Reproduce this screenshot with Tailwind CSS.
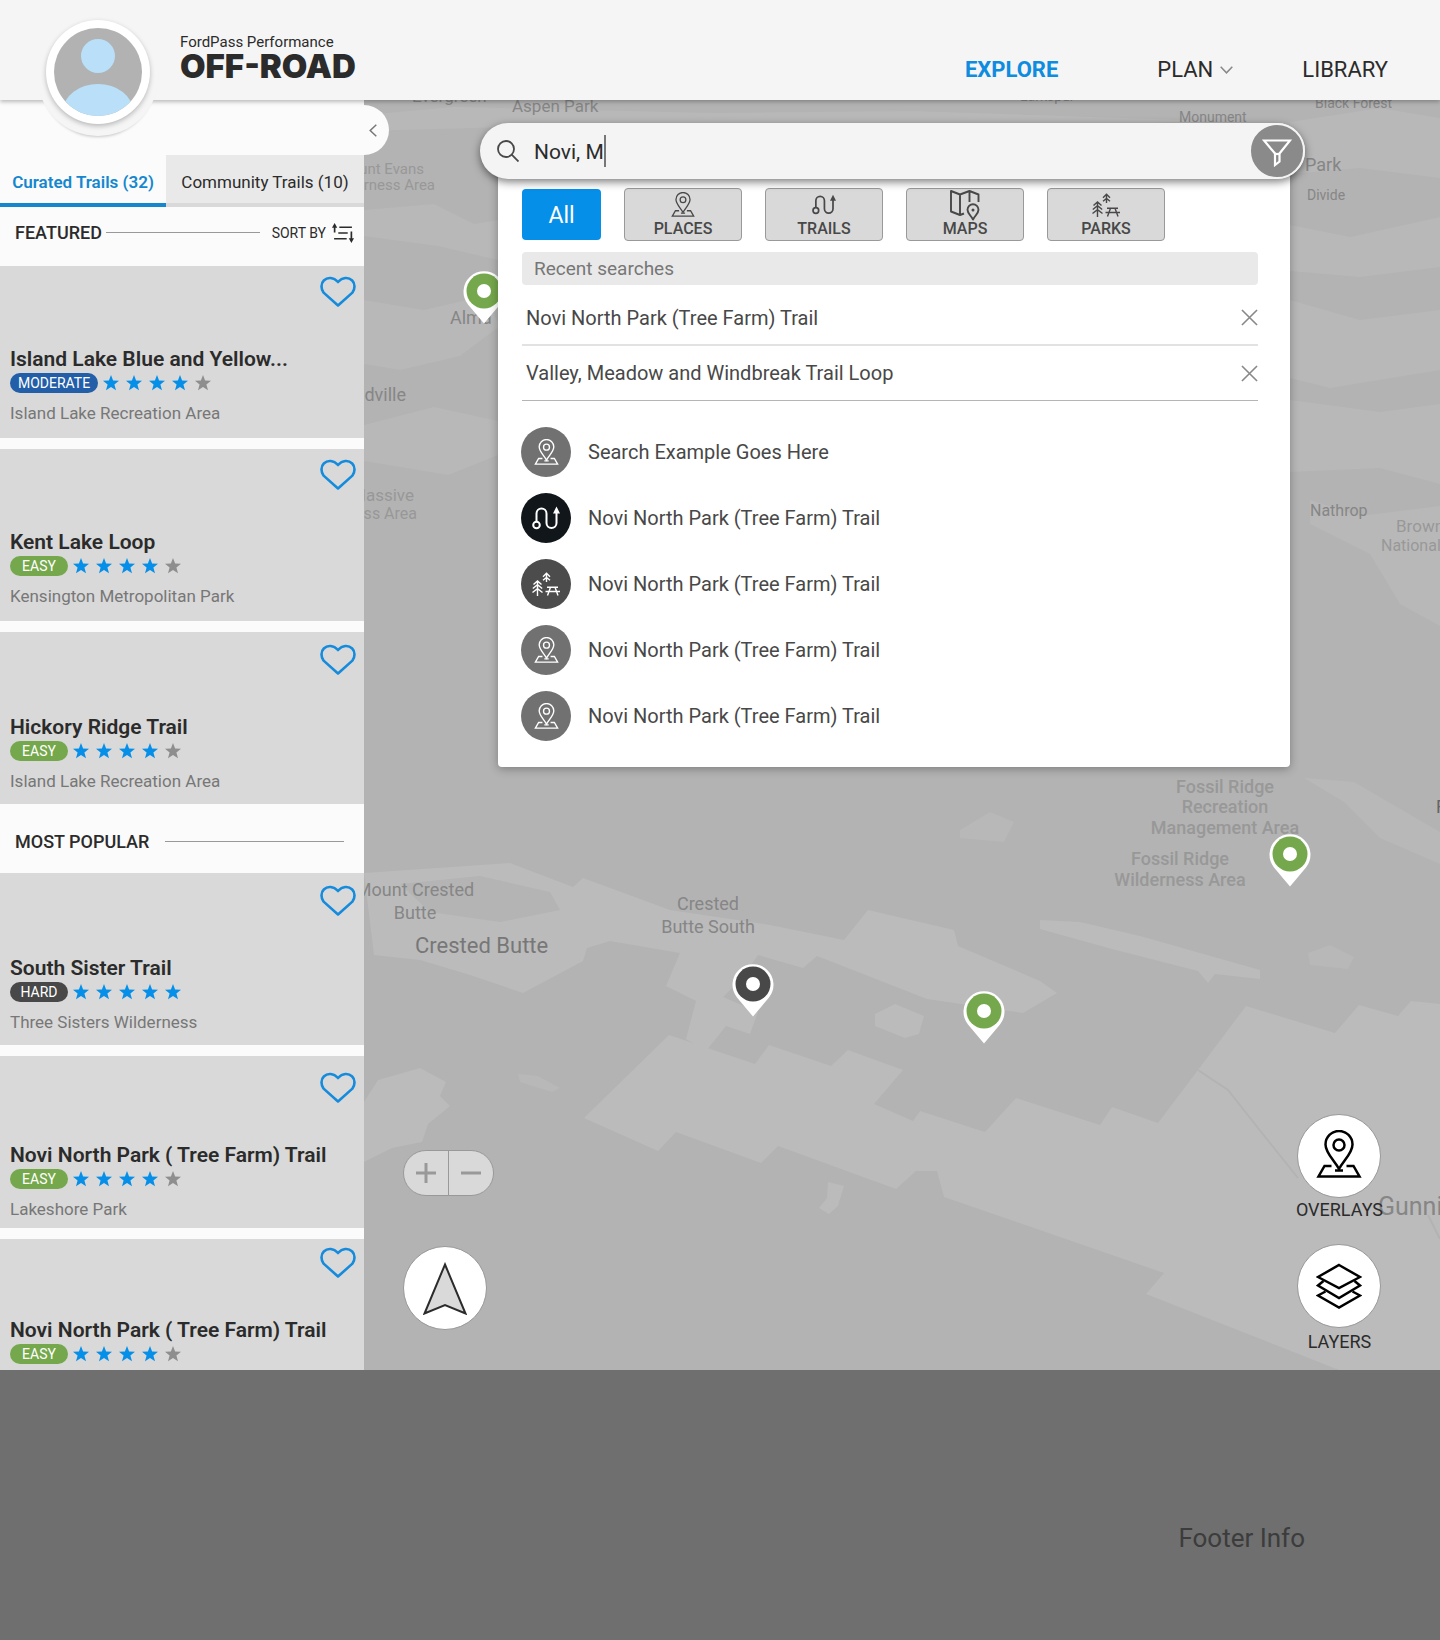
<!DOCTYPE html>
<html lang="en">
<head>
  <meta charset="UTF-8" />
  <meta name="viewport" content="width=device-width, initial-scale=1.0" />
  <title>FordPass Performance Off-Road</title>
  <script src="https://cdn.jsdelivr.net/npm/@tailwindcss/browser@4"></script>
</head>
<body class="min-h-screen flex flex-col bg-[#6f6f6f] font-[Roboto,'Liberation_Sans',sans-serif] text-[#2b2b2b]">

  <!-- Shared icons -->
  <svg class="hidden">
    <symbol id="heart" viewBox="0 0 36 31"><path d="M18 29.5 3.6 16.6C.8 13 .8 7.400 3.800 4.500 7.600.8 13.500 1 18 6c4.500-5 10.400-5.200 14.200-1.500 3 2.900 3 8.500.2 12.100Z" fill="none" stroke="currentColor" stroke-width="2.600" stroke-linejoin="round" /></symbol>
    <symbol id="star" viewBox="0 0 16 16"><path d="m8 0 2.100 5.500 5.900.3-4.600 3.700L13 15.300 8 12l-5 3.300 1.600-5.800L0 5.800l5.900-.3Z" fill="currentColor" /></symbol>
    <symbol id="place" viewBox="0 0 46 48">
      <g fill="none" stroke="currentColor" stroke-width="2.500">
        <path d="M23 39C18 30 9.500 23 9.500 14.500a13.500 13.500 0 0 1 27 0C36.500 23 28 30 23 39Z" />
        <circle cx="23" cy="15" r="5.500" />
        <path d="M15.500 36H8.500L2.500 46.500h41L37.500 36h-7M19 40.500h8" />
      </g>
    </symbol>
    <symbol id="trail" viewBox="0 0 28 24">
      <g fill="none" stroke="currentColor" stroke-width="2">
        <circle cx="4.500" cy="19" r="3.300" />
        <path d="M4.500 15.500V7.500a5 5 0 0 1 10 0v9.500a5 5 0 0 0 10 0V6" />
      </g>
      <path d="m24.500.5 3.500 7h-7Z" fill="currentColor" />
    </symbol>
    <symbol id="park" viewBox="0 0 28 24">
      <g fill="none" stroke="currentColor" stroke-width="1.400">
        <path d="M14.500 10V.8m-3.500 4 3.500-3.500 3.500 3.500M11 8.300l3.500-2.800L18 8.300" />
        <path d="M5.500 24V9M1.500 12.500l4-3.500 4 3.500M.8 16.500l4.700-3.800 4.700 3.800M.5 20.500l5-3.800 5 3.800" />
        <path d="M15 15.200h11M13.500 19.500h14.500M18.500 15.200 15.500 23.500M23 15.200l3 8.300" />
      </g>
    </symbol>
    <symbol id="map" viewBox="0 0 32 32">
      <g fill="none" stroke="currentColor" stroke-width="1.900" stroke-linejoin="round">
        <path d="M15 24.500l-4 1.500-9-3.500V2l9 3.500L20.500 2l9 3.500v7.500M11 5.500V26M20.500 2v11" />
        <path d="M24 30.500c-2-4-5.500-6-5.500-9.700a5.500 5.500 0 0 1 11 0c0 3.700-3.500 5.700-5.500 9.700Z" />
      </g>
      <circle cx="24" cy="21" r="1.500" fill="currentColor" />
    </symbol>
    <symbol id="close" viewBox="0 0 18 18"><path d="M1 1l16 16M17 1 1 17" stroke="currentColor" stroke-width="1.700" fill="none" /></symbol>
    <symbol id="pin" viewBox="0 0 42 54">
      <path d="M21 53.500 5 34.500A20.500 20.500 0 1 1 37 34.500Z" fill="#fff" />
      <circle cx="21" cy="21" r="17.500" fill="currentColor" />
      <circle cx="21" cy="21" r="7" fill="#fff" />
    </symbol>
  </svg>

  <header class="relative z-30 h-[100px] bg-[#f5f5f5] shadow-[0_2px_4px_rgba(0,0,0,0.25)] flex items-start justify-between pl-[180px] pr-[52px]">
    <div class="absolute left-[37px] top-[14px] size-[122px] rounded-full bg-[#f5f5f5] shadow-[0_5px_3px_-4px_rgba(0,0,0,0.2)]"></div>
    <a href="#" aria-label="Profile" class="absolute left-[46px] top-[20px] size-[104px] rounded-full bg-white p-2 shadow-[0_2px_5px_rgba(0,0,0,0.25)]">
      <svg class="size-[88px] rounded-full bg-[#b2b2b2]" viewBox="0 0 88 88">
        <circle cx="44" cy="28" r="17" fill="#b9e0f8" />
        <ellipse cx="44" cy="83" rx="35" ry="27" fill="#b9e0f8" />
      </svg>
    </a>
    <div class="pt-8">
      <p class="text-[15px] leading-5">FordPass Performance</p>
      <h1 class="font-[Inter,sans-serif] font-black text-[33px] leading-7">OFF-ROAD</h1>
    </div>
    <nav class="flex items-center pt-14 text-[22px] leading-7">
      <a href="#" class="font-bold text-[#0d8ce0] mr-[99px]">EXPLORE</a>
      <button class="flex items-center gap-[7px] mr-[69px]">PLAN
        <svg class="w-[13px] h-2" viewBox="0 0 13 8"><path d="M.7.7 6.500 6.800 12.300.7" fill="none" stroke="#888" stroke-width="1.500" /></svg>
      </button>
      <a href="#">LIBRARY</a>
    </nav>
  </header>

  <main class="flex">

    <aside class="w-[364px] shrink-0 bg-[#fbfbfb] pt-[55px]">
      <div class="flex h-[52px] text-[17px]">
        <button class="w-[166px] border-b-4 border-[#1487cf] pt-2 font-semibold text-[#1487cf]">Curated Trails (32)</button>
        <button class="flex-1 border-b-4 border-[#d9d9d9] bg-[#e9e9e9] pt-2">Community Trails (10)</button>
      </div>

      <div class="flex items-center h-[59px] pl-[15px] pr-2.5 pb-2">
        <h2 class="text-lg font-medium">FEATURED</h2>
        <div class="flex-1 h-px bg-[#999] ml-1 mr-3"></div>
        <button class="flex items-center gap-1.5 text-sm">SORT BY
          <svg class="w-[22px] h-5" viewBox="0 0 21 19"><g fill="none" stroke="#2b2b2b" stroke-width="1.600"><path d="M2.500 9V3M7 4h12M6 9.500h9M2 15h12M18.500 8v8" /></g><path d="M2.500 0 5 4.500H0ZM18.500 19 16 14.500h5Z" fill="#2b2b2b" /></svg>
        </button>
      </div>

      <div class="flex flex-col gap-[11px]">
        <article class="h-[172px] bg-[#d9d9d9] pt-2.5 px-2.5">
          <button aria-label="Save" class="block ml-auto -mr-0.5 text-[#148bdc]"><svg class="w-9 h-[31px]"><use href="#heart" /></svg></button>
          <h3 class="mt-[38px] text-[21px] leading-7 font-semibold">Island Lake Blue and Yellow...</h3>
          <div class="flex items-center gap-[5px]">
            <span class="w-[88px] h-5 rounded-full bg-[#235ea8] text-white text-sm leading-5 text-center">MODERATE</span>
            <span role="img" aria-label="4 of 5 stars" class="flex gap-[7px] text-[#068fe9]"><svg class="size-4"><use href="#star" /></svg><svg class="size-4"><use href="#star" /></svg><svg class="size-4"><use href="#star" /></svg><svg class="size-4"><use href="#star" /></svg><svg class="size-4 text-[#8e8e8e]"><use href="#star" /></svg></span>
          </div>
          <p class="mt-2 text-[17px] leading-6 text-[#777]">Island Lake Recreation Area</p>
        </article>

        <article class="h-[172px] bg-[#d9d9d9] pt-2.5 px-2.5">
          <button aria-label="Save" class="block ml-auto -mr-0.5 text-[#148bdc]"><svg class="w-9 h-[31px]"><use href="#heart" /></svg></button>
          <h3 class="mt-[38px] text-[21px] leading-7 font-semibold">Kent Lake Loop</h3>
          <div class="flex items-center gap-[5px]">
            <span class="w-[58px] h-5 rounded-full bg-[#75a74c] text-white text-sm leading-5 text-center">EASY</span>
            <span role="img" aria-label="4 of 5 stars" class="flex gap-[7px] text-[#068fe9]"><svg class="size-4"><use href="#star" /></svg><svg class="size-4"><use href="#star" /></svg><svg class="size-4"><use href="#star" /></svg><svg class="size-4"><use href="#star" /></svg><svg class="size-4 text-[#8e8e8e]"><use href="#star" /></svg></span>
          </div>
          <p class="mt-2 text-[17px] leading-6 text-[#777]">Kensington Metropolitan Park</p>
        </article>

        <article class="h-[172px] bg-[#d9d9d9] pt-3 px-2.5">
          <button aria-label="Save" class="block ml-auto -mr-0.5 text-[#148bdc]"><svg class="w-9 h-[31px]"><use href="#heart" /></svg></button>
          <h3 class="mt-[38px] text-[21px] leading-7 font-semibold">Hickory Ridge Trail</h3>
          <div class="flex items-center gap-[5px]">
            <span class="w-[58px] h-5 rounded-full bg-[#75a74c] text-white text-sm leading-5 text-center">EASY</span>
            <span role="img" aria-label="4 of 5 stars" class="flex gap-[7px] text-[#068fe9]"><svg class="size-4"><use href="#star" /></svg><svg class="size-4"><use href="#star" /></svg><svg class="size-4"><use href="#star" /></svg><svg class="size-4"><use href="#star" /></svg><svg class="size-4 text-[#8e8e8e]"><use href="#star" /></svg></span>
          </div>
          <p class="mt-2 text-[17px] leading-6 text-[#777]">Island Lake Recreation Area</p>
        </article>
      </div>

      <div class="flex items-center h-[69px] pl-[15px] pr-5 pt-1.5">
        <h2 class="text-lg font-medium">MOST POPULAR</h2>
        <div class="flex-1 h-px bg-[#999] ml-4"></div>
      </div>

      <div class="flex flex-col gap-[11px]">
        <article class="h-[172px] bg-[#d9d9d9] pt-3 px-2.5">
          <button aria-label="Save" class="block ml-auto -mr-0.5 text-[#148bdc]"><svg class="w-9 h-[31px]"><use href="#heart" /></svg></button>
          <h3 class="mt-[38px] text-[21px] leading-7 font-semibold">South Sister Trail</h3>
          <div class="flex items-center gap-[5px]">
            <span class="w-[58px] h-5 rounded-full bg-[#484848] text-white text-sm leading-5 text-center">HARD</span>
            <span role="img" aria-label="5 of 5 stars" class="flex gap-[7px] text-[#068fe9]"><svg class="size-4"><use href="#star" /></svg><svg class="size-4"><use href="#star" /></svg><svg class="size-4"><use href="#star" /></svg><svg class="size-4"><use href="#star" /></svg><svg class="size-4"><use href="#star" /></svg></span>
          </div>
          <p class="mt-2 text-[17px] leading-6 text-[#777]">Three Sisters Wilderness</p>
        </article>

        <article class="h-[172px] bg-[#d9d9d9] pt-4 px-2.5">
          <button aria-label="Save" class="block ml-auto -mr-0.5 text-[#148bdc]"><svg class="w-9 h-[31px]"><use href="#heart" /></svg></button>
          <h3 class="mt-[38px] text-[21px] leading-7 font-semibold">Novi North Park ( Tree Farm) Trail</h3>
          <div class="flex items-center gap-[5px]">
            <span class="w-[58px] h-5 rounded-full bg-[#75a74c] text-white text-sm leading-5 text-center">EASY</span>
            <span role="img" aria-label="4 of 5 stars" class="flex gap-[7px] text-[#068fe9]"><svg class="size-4"><use href="#star" /></svg><svg class="size-4"><use href="#star" /></svg><svg class="size-4"><use href="#star" /></svg><svg class="size-4"><use href="#star" /></svg><svg class="size-4 text-[#8e8e8e]"><use href="#star" /></svg></span>
          </div>
          <p class="mt-2 text-[17px] leading-6 text-[#777]">Lakeshore Park</p>
        </article>

        <article class="bg-[#d9d9d9] pt-2 px-2.5 pb-1.5">
          <button aria-label="Save" class="block ml-auto -mr-0.5 text-[#148bdc]"><svg class="w-9 h-[31px]"><use href="#heart" /></svg></button>
          <h3 class="mt-[38px] text-[21px] leading-7 font-semibold">Novi North Park ( Tree Farm) Trail</h3>
          <div class="flex items-center gap-[5px]">
            <span class="w-[58px] h-5 rounded-full bg-[#75a74c] text-white text-sm leading-5 text-center">EASY</span>
            <span role="img" aria-label="4 of 5 stars" class="flex gap-[7px] text-[#068fe9]"><svg class="size-4"><use href="#star" /></svg><svg class="size-4"><use href="#star" /></svg><svg class="size-4"><use href="#star" /></svg><svg class="size-4"><use href="#star" /></svg><svg class="size-4 text-[#8e8e8e]"><use href="#star" /></svg></span>
          </div>
        </article>
      </div>
    </aside>

    <section class="relative flex-1 bg-[#b3b3b3] overflow-hidden">

      <!-- Map -->
      <svg class="absolute inset-0 size-full" viewBox="364 100 1076 1270" preserveAspectRatio="xMinYMin slice">
        <g fill="#bbb">
          <path d="M669 1035 584 1118l74 33 18-19 85 31 17-17 118 43 20-18 21 0 7 26 220 76-18 21 193 76h101V1004l-29-3-13 15-39-11-24 28-89-27-48 64-40 53-46-16-12 18-84-27-31 34-65-21-7 10-39-17 29-34-55-20-17 16-62-21-14 19Z" />
          <path d="M364 873l146-10 63 24 10-9 87 32 100 15 74 15 24-30 86 20 4 16 82 35 17 12-34 20-96-14-110-43-14 12-45-13-15 22-20 20 35 15-8 22-24-8-20 25-20-12 10-38-30-15 14-33-70-12-23 7-4 13-60 32-53-18-50-15-46-5Z" />
          <path d="M1040 920l40 2 60 14 120 34v9l-45-5-7 9-10-12-86-22-72-20Z" />
          <path d="M420 1068l26 14-6 14 10 10-22 18-6 18-30 6-28 14v-60l14-22Z" />
          <path d="M875 1014l20-10 29 12-5 18-14 4-30-12Z" />
          <path d="M828 1182l16 4-6 20-9 8-10-6 8-10Z" />
        </g>
        <g fill="#b8b8b8">
          <path d="M1308 953l22-8 24 12-6 12-38-4Z" />
          <path d="M518 1074l20 2 22 12-8 4-32-10Z" />
          <path d="M364 300l60 10 60-14 16 30-40 30-60 14-36-6Z" />
          <path d="M364 210l70-6 40 20 24-4v40l-60-14-74-10Z" />
          <path d="M364 115l90-8 260 6 200-2 300 10-120 4-280-2-230 2-220 6Z" />
          <path d="M364 425l70-18 64 14v34l-50 20-84-14Z" />
          <path d="M1290 122l90-14 60 10v60l-80-10-70 6Z" />
          <path d="M1290 225l60 12 90-20v50l-80 10-70-6Z" />
          <path d="M1290 300l70 20 80-10v60l-110 18-40-10Z" />
          <path d="M1290 400l90 12 60-8v80l-60-16-90 4Z" />
          <path d="M1310 500l50 16 80-10v120l-40-22-30-50-60-30Z" />
          <path d="M1304 778l50 4 86 50v32l-60-26-36-36Z" />
          <path d="M960 830l30-18 24 10-10 20-44-4Z" />
        </g>
        <path d="M400 884l80-8 70 16 10 18-60 12-70-10Z" fill="#b4b4b4" />
        <path d="M1198 1070l30 20 30 38 40 50M1428 1215l12 24" fill="none" stroke="#b3b3b3" stroke-width="2" />

        <g fill="#868686" font-size="18">
          <text x="412" y="102" font-size="17">Evergreen</text>
          <text x="512" y="112" font-size="17">Aspen Park</text>
          <text x="1020" y="101" font-size="14">Larkspur</text>
          <text x="1179" y="122" font-size="14">Monument</text>
          <text x="1315" y="108" font-size="14">Black Forest</text>
          <text x="1305" y="171">Park</text>
          <text x="1307" y="200" font-size="14">Divide</text>
          <text x="450" y="324">Alma</text>
          <text x="406" y="401" text-anchor="end">Leadville</text>
          <text x="1310" y="516" font-size="16">Nathrop</text>
          <text x="415" y="896" text-anchor="middle">Mount Crested</text>
          <text x="415" y="919" text-anchor="middle">Butte</text>
          <text x="708" y="910" text-anchor="middle">Crested</text>
          <text x="708" y="933" text-anchor="middle">Butte South</text>
          <text x="415" y="953" font-size="22" fill="#777">Crested Butte</text>
          <text x="1378" y="1215" font-size="25">Gunnison</text>
          <text x="1436" y="813" fill="#666">F</text>
        </g>
        <g fill="#989898" font-size="18" font-weight="500" text-anchor="middle">
          <text x="1225" y="793">Fossil Ridge</text>
          <text x="1225" y="813">Recreation</text>
          <text x="1225" y="834">Management Area</text>
          <text x="1180" y="865">Fossil Ridge</text>
          <text x="1180" y="886">Wilderness Area</text>
        </g>
        <g fill="#989898" font-size="15">
          <text x="424" y="174" text-anchor="end">Mount Evans</text>
          <text x="435" y="190" text-anchor="end">Wilderness Area</text>
          <text x="414" y="501" text-anchor="end" font-size="17">Massive</text>
          <text x="417" y="519" text-anchor="end" font-size="16">Wilderness Area</text>
          <text x="1396" y="532" font-size="17">Browns</text>
          <text x="1381" y="551" font-size="16">National</text>
        </g>

        <g color="#75a74c">
          <use href="#pin" x="463" y="270" width="42" height="54" />
          <use href="#pin" x="1269" y="833" width="42" height="54" />
          <use href="#pin" x="963" y="990" width="42" height="54" />
          <use href="#pin" x="732" y="963" width="42" height="54" color="#484848" />
        </g>
      </svg>

      <button aria-label="Collapse" class="absolute left-0 top-[5px] w-[25px] h-[50px] rounded-r-full bg-[#fbfbfb] pl-[5px]">
        <svg class="w-2 h-[13px]" viewBox="0 0 8 13"><path d="M7.300.7 1.200 6.500l6.100 5.800" fill="none" stroke="#777" stroke-width="1.500" /></svg>
      </button>

      <!-- Search -->
      <div class="absolute left-[116px] right-[135px] top-[23px]">
        <form class="relative z-10 flex items-center h-14 rounded-full bg-[#f4f4f4] pl-[17px] shadow-[0_3px_8px_rgba(0,0,0,0.5)]">
          <svg class="w-[22px] h-[22px] mr-[15px]" viewBox="0 0 22 22"><g fill="none" stroke="#484848" stroke-width="1.800"><circle cx="9" cy="9" r="8" /><path d="m14.700 14.700 6.800 6.800" /></g></svg>
          <input type="text" aria-label="Search" value="Novi, M" class="field-sizing-content pt-0.5 text-[21px] leading-8 outline-none" />
          <span class="w-0.5 h-8 bg-[#777]"></span>
          <button type="button" aria-label="Filter" class="ml-auto size-14 rounded-full bg-[#8a8a8a] border-2 border-[#f4f4f4] flex items-center justify-center">
            <svg class="w-[30px] h-7 mt-1" viewBox="0 0 30 28"><g fill="none" stroke="#fff" stroke-width="2.200"><path d="M2 1.500h26L17.500 14.500v8L13 26V14.500Z" /><path d="M13 15h4.500" /></g></svg>
          </button>
        </form>

        <div class="-mt-4 ml-[18px] mr-[15px] rounded-b bg-white pt-[25px] pl-6 pr-8 pb-[26px] text-[#484848] shadow-[0_2px_10px_rgba(0,0,0,0.3)]">
          <div class="flex items-center gap-[23px] h-[53px] text-base font-medium leading-4">
            <button class="w-[79px] h-[51px] rounded bg-[#068fe9] pt-0.5 text-white text-[23px] font-normal">All</button>
            <button class="w-[118px] h-[53px] rounded border border-[#999] bg-[#d9d9d9] flex flex-col items-center justify-end pb-[3px]"><svg class="w-6 h-[25px] mb-1"><use href="#place" /></svg>PLACES</button>
            <button class="w-[118px] h-[53px] rounded border border-[#999] bg-[#d9d9d9] flex flex-col items-center justify-end pb-[3px]"><svg class="w-6 h-[21px] mb-1.5"><use href="#trail" /></svg>TRAILS</button>
            <button class="w-[118px] h-[53px] rounded border border-[#999] bg-[#d9d9d9] flex flex-col items-center justify-end pb-[3px]"><svg class="size-8"><use href="#map" /></svg>MAPS</button>
            <button class="w-[118px] h-[53px] rounded border border-[#999] bg-[#d9d9d9] flex flex-col items-center justify-end pb-[3px]"><svg class="w-7 h-6 mb-1"><use href="#park" /></svg>PARKS</button>
          </div>

          <h2 class="mt-[11px] h-[33px] rounded bg-[#e9e9e9] pl-3 pt-px text-[19px] leading-8 text-[#777]">Recent searches</h2>
          <ul class="text-[20px] leading-8">
            <li class="flex items-center justify-between h-[61px] pt-1.5 pl-1 border-b-2 border-[#e2e2e2]">Novi North Park (Tree Farm) Trail
              <button aria-label="Remove" class="text-[#888]"><svg class="size-[17px]"><use href="#close" /></svg></button>
            </li>
            <li class="flex items-center justify-between h-[55px] pl-1 border-b border-[#b5b5b5]">Valley, Meadow and Windbreak Trail Loop
              <button aria-label="Remove" class="text-[#888]"><svg class="size-[17px]"><use href="#close" /></svg></button>
            </li>
          </ul>

          <ul class="mt-[26px] -ml-px flex flex-col gap-4 text-[20px] leading-8">
            <li><a href="#" class="flex items-center gap-[17px]"><span class="size-[50px] rounded-full bg-[#717171] text-white flex items-center justify-center"><svg class="w-[25px] h-[26px]"><use href="#place" /></svg></span>Search Example Goes Here</a></li>
            <li><a href="#" class="flex items-center gap-[17px]"><span class="size-[50px] rounded-full bg-[#10161a] text-white flex items-center justify-center"><svg class="w-7 h-6"><use href="#trail" /></svg></span>Novi North Park (Tree Farm) Trail</a></li>
            <li><a href="#" class="flex items-center gap-[17px]"><span class="size-[50px] rounded-full bg-[#4c4c4c] text-white flex items-center justify-center"><svg class="w-7 h-6"><use href="#park" /></svg></span>Novi North Park (Tree Farm) Trail</a></li>
            <li><a href="#" class="flex items-center gap-[17px]"><span class="size-[50px] rounded-full bg-[#717171] text-white flex items-center justify-center"><svg class="w-[25px] h-[26px]"><use href="#place" /></svg></span>Novi North Park (Tree Farm) Trail</a></li>
            <li><a href="#" class="flex items-center gap-[17px]"><span class="size-[50px] rounded-full bg-[#717171] text-white flex items-center justify-center"><svg class="w-[25px] h-[26px]"><use href="#place" /></svg></span>Novi North Park (Tree Farm) Trail</a></li>
          </ul>
        </div>
      </div>

      <!-- Map controls -->
      <div class="absolute left-[39px] bottom-10 flex flex-col gap-[50px]">
        <div class="flex w-[91px] h-[46px] rounded-full border border-[#999] bg-[#d9d9d9] overflow-hidden">
          <button aria-label="Zoom in" class="flex-1 flex items-center justify-center border-r border-[#999]"><svg class="size-5" viewBox="0 0 20 20"><path d="M10 0v20M0 10h20" stroke="#999" stroke-width="3" /></svg></button>
          <button aria-label="Zoom out" class="flex-1 flex items-center justify-center"><svg class="size-5" viewBox="0 0 20 20"><path d="M0 10h20" stroke="#999" stroke-width="3" /></svg></button>
        </div>
        <button aria-label="Locate" class="size-[84px] rounded-full bg-white border border-[#999] flex items-center justify-center">
          <svg class="w-11 h-[53px]" viewBox="0 0 44 53"><path d="M22 2.500 42.500 51.500 22 43 1.500 51.500Z" fill="#d9d9d9" stroke="#2b2b2b" stroke-width="2" /></svg>
        </button>
      </div>

      <div class="absolute right-[57px] bottom-4 flex flex-col items-center gap-[22px] text-lg leading-6">
        <button class="flex flex-col items-center">
          <span class="size-[84px] rounded-full bg-white border border-[#999] flex items-center justify-center text-black"><svg class="w-[46px] h-12 mb-1"><use href="#place" /></svg></span>
          OVERLAYS
        </button>
        <button class="flex flex-col items-center">
          <span class="size-[84px] rounded-full bg-white border border-[#999] flex items-center justify-center">
            <svg class="w-[46px] h-[46px]" viewBox="0 0 46 46"><g fill="none" stroke="#000" stroke-width="2.500"><path d="M23 2 44 14 23 25 2 14Z" /><path d="M7.500 18 2 22.500 23 35l21-12.500L38.500 18" /><path d="M9.500 28.500 2 32.500 23 44.500l21-12-7.500-4" /></g></svg>
          </span>
          <span class="pt-0.5">LAYERS</span>
        </button>
      </div>
    </section>
  </main>

  <footer class="flex-1 flex justify-end pt-[150px] pr-[135px] pb-20">
    <p class="text-[26px] leading-9 text-[#3c3c3c]">Footer Info</p>
  </footer>

</body>
</html>
